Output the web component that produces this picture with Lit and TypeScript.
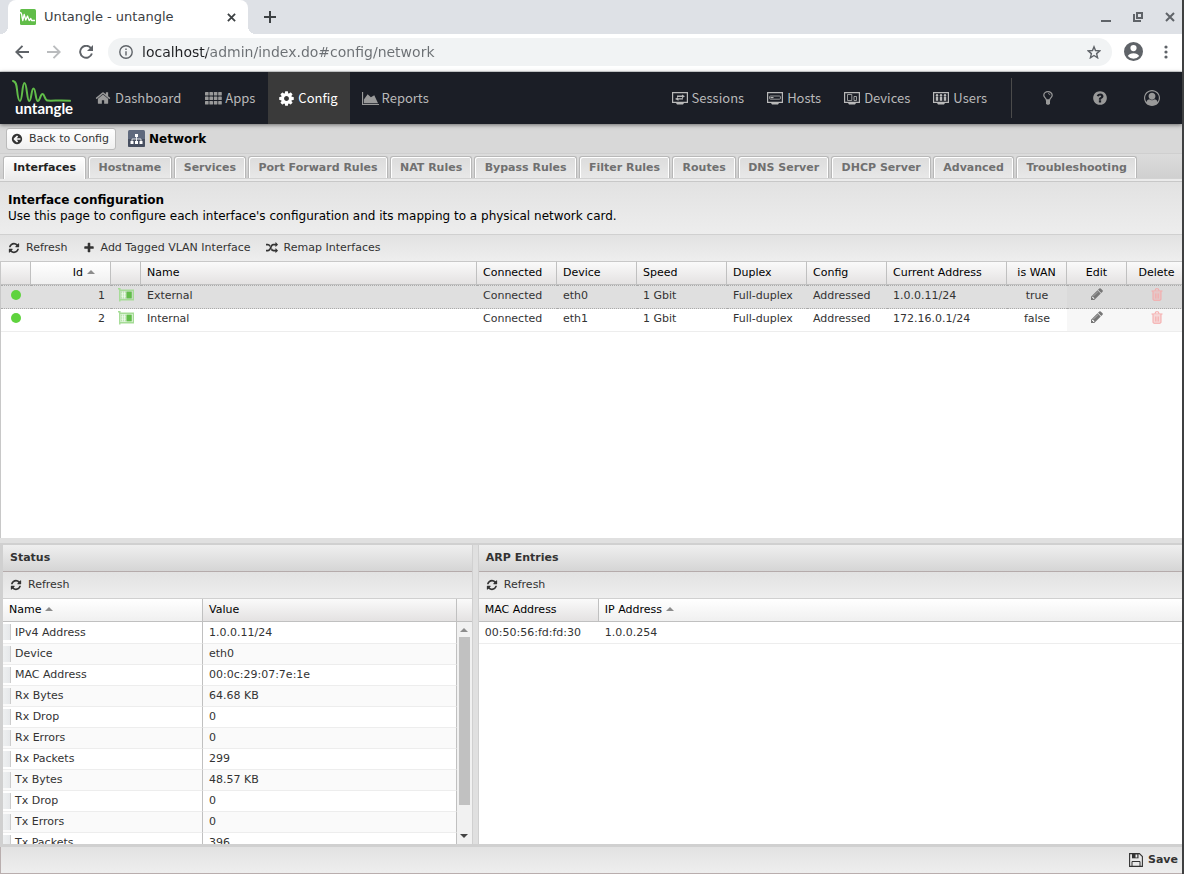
import { LitElement, html, css, svg, nothing } from "lit";
import { customElement, property } from "lit/decorators.js";

type Glyph = { box: string; body: unknown };

const fa = (d: string): Glyph => ({ box: "0 0 1792 1792", body: svg`<path d=${d} />` });

const DISC =
  "m256-64q0 209-103 385.500t-279.500 279.500-385.500 103-385.500-103-279.500-279.500-103-385.500 103-385.500 279.500-279.500 385.500-103 385.500 103 279.500 279.500 103 385.500z";

const monitor = (inner: unknown): Glyph => ({
  box: "0 0 16 13",
  body: svg`<path fill="none" stroke="currentColor" stroke-width="1.2" d="M.6.6h14.8v9.800H.6z"/><path d="M4 11h8l-1 1.500H5z"/>${inner}`,
});

const GLYPHS: Record<string, Glyph> = {
  back: fa(
    "M1408 960v-128q0-26-19-45t-45-19h-502l189-189q19-19 19-45t-19-45l-91-91q-18-18-45-18t-45 18l-362 362-91 91q-18 18-18 45t18 45l91 91 362 362q18 18 45 18t45-18l91-91q18-18 18-45t-18-45l-189-189h502q26 0 45-19t19-45z" + DISC,
  ),
  refresh: fa(
    "M1639 1056q0 5-1 7-64 268-268 434.500t-478 166.500q-146 0-282.500-55t-243.500-157l-129 129q-19 19-45 19t-45-19-19-45v-448q0-26 19-45t45-19h448q26 0 45 19t19 45-19 45l-137 137q71 66 161 102t187 36q134 0 250-65t186-179q11-17 53-117 8-23 30-23h192q13 0 22.500 9.500t9.500 22.500zm25-800v448q0 26-19 45t-45 19h-448q-26 0-45-19t-19-45 19-45l138-138q-148-137-349-137-134 0-250 65t-186 179q-11 17-53 117-8 23-30 23h-199q-13 0-22.500-9.500t-9.500-22.500v-7q65-268 270-434.500t480-166.500q146 0 284 55.500t245 156.500l130-129q19-19 45-19t45 19 19 45z",
  ),
  plus: fa(
    "M1600 736v192q0 40-28 68t-68 28h-416v416q0 40-28 68t-68 28h-192q-40 0-68-28t-28-68v-416h-416q-40 0-68-28t-28-68v-192q0-40 28-68t68-28h416v-416q0-40 28-68t68-28h192q40 0 68 28t28 68v416h416q40 0 68 28t28 68z",
  ),
  random: fa(
    "M666 481q-60 92-137 273-22-45-37-72.500t-40.500-63.500-51-56.500-63-35-81.500-14.500h-224q-14 0-23-9t-9-23v-192q0-14 9-23t23-9h224q250 0 410 225zm1126 799q0 14-9 23l-320 320q-9 9-23 9-13 0-22.500-9.500t-9.500-22.500v-192q-32 0-85 .5t-81 1-73-1-71-5-64-10.500-63-18.500-58-28.500-59-40-55-53.500-56-69.500q59-93 136-273 22 45 37 72.500t40.500 63.500 51 56.500 63 35 81.500 14.500h256v-192q0-14 9-23t23-9q12 0 24 10l319 319q9 9 9 23zm0-896q0 14-9 23l-320 320q-9 9-23 9-13 0-22.500-9.500t-9.500-22.500v-192h-256q-48 0-87 15t-69 45-51 61.500-45 77.500q-32 62-78 171-29 66-49.500 111t-54 105-64 100-74 83-90 68.500-106.500 42-128 16.500h-224q-14 0-23-9t-9-23v-192q0-14 9-23t23-9h224q48 0 87-15t69-45 51-61.500 45-77.500q32-62 78-171 29-66 49.500-111t54-105 64-100 74-83 90-68.500 106.500-42 128-16.500h256v-192q0-14 9-23t23-9q12 0 24 10l319 319q9 9 9 23z",
  ),
  pencil: fa(
    "M491 1536l91-91-235-235-91 91v107h128v128h107zm523-928q0-22-22-22-10 0-17 7l-542 542q-7 7-7 17 0 22 22 22 10 0 17-7l542-542q7-7 7-17zm-54-192l416 416-832 832h-416v-416zm683 96q0 53-37 90l-166 166-416-416 166-165q36-38 90-38 53 0 91 38l235 234q37 39 37 91z",
  ),
  cog: fa(
    "M1152 896q0-106-75-181t-181-75-181 75-75 181 75 181 181 75 181-75 75-181zm512-109v222q0 12-8 23t-20 13l-185 28q-19 54-39 91 35 50 107 138 10 12 10 25t-9 23q-27 37-99 108t-94 71q-12 0-26-9l-138-108q-44 23-91 38-16 136-29 186-7 28-36 28h-222q-14 0-24.500-8.500t-11.500-21.500l-28-184q-49-16-90-37l-141 107q-10 9-25 9-14 0-25-11-126-114-165-168-7-10-7-23 0-12 8-23 15-21 51-66.500t54-70.500q-27-50-41-99l-183-27q-13-2-21-12.500t-8-23.500v-222q0-12 8-23t19-13l186-28q14-46 39-92-40-57-107-138-10-12-10-24 0-10 9-23 26-36 98.500-107.500t94.500-71.500q13 0 26 10l138 107q44-23 91-38 16-136 29-186 7-28 36-28h222q14 0 24.500 8.500t11.500 21.500l28 184q49 16 90 37l142-107q9-9 24-9 13 0 25 10 129 119 165 170 7 8 7 22 0 12-8 23-15 21-51 66.500t-54 70.500q26 50 41 98l183 28q13 2 21 12.500t8 23.500z",
  ),
  home: fa(
    "M1472 992v480q0 26-19 45t-45 19h-384v-384h-256v384h-384q-26 0-45-19t-19-45v-480q0-1 .5-3t.5-3l575-474 575 474q1 2 1 6zm223-69l-62 74q-8 9-21 11h-3q-13 0-21-7l-692-577-692 577q-12 8-24 7-13-2-21-11l-62-74q-8-10-7-23.500t11-21.500l719-599q32-26 76-26t76 26l244 204v-195q0-14 9-23t23-9h192q14 0 23 9t9 23v408l219 182q10 8 11 21.500t-7 23.500z",
  ),
  question: fa(
    "M1024 1376v-192q0-14-9-23t-23-9h-192q-14 0-23 9t-9 23v192q0 14 9 23t23 9h192q14 0 23-9t9-23zm256-672q0-88-55.500-163t-138.500-116-170-41q-243 0-371 213-15 24 8 42l132 100q7 6 19 6 16 0 25-12 53-68 86-92 34-24 86-24 48 0 85.500 26t37.500 59q0 38-20 61t-68 45q-63 28-115.500 86.500t-52.500 125.500v36q0 14 9 23t23 9h192q14 0 23-9t9-23q0-19 21.500-49.500t54.500-49.500q32-18 49-28.500t46-35 44.500-48 28-60.500 12.500-81zm384 192q0 209-103 385.500t-279.500 279.500-385.500 103-385.500-103-279.500-279.500-103-385.500 103-385.500 279.500-279.500 385.500-103 385.500 103 279.500 279.500 103 385.500z",
  ),
  account: fa(
    "M896 0q182 0 348 71t286 191 191 286 71 348q0 181-70.500 347t-190.500 286-286 191.500-349 71.500-349-71-285.500-191.500-190.500-286-71-347.500 71-348 191-286 286-191 348-71zm619 1351q149-205 149-455 0-156-61-298t-164-245-245-164-298-61-298 61-245 164-164 245-61 298q0 250 149 455 66-327 306-327 131 128 313 128t313-128q240 0 306 327zm-235-647q0-159-112.500-271.500t-271.500-112.500-271.500 112.500-112.500 271.500 112.500 271.500 271.500 112.500 271.500-112.500 112.500-271.500z",
  ),
  apps: {
    box: "0 0 17 13",
    body: svg`${[0, 4.5, 9].map((y) => [0, 4.4, 8.8, 13.2].map((x) => svg`<rect x=${x} y=${y} width="3.6" height="3.6" rx=".6"/>`))}`,
  },
  area: {
    box: "0 0 18 14",
    body: svg`<path d="M0 0h1.200v12.800H18V14H0zM2 12V8l4-5.500 3.400 3.200L13 3.600 17 12z"/>`,
  },
  trash: {
    box: "0 0 12 13",
    body: svg`<path fill-opacity=".4" d="M2 4h8v8H2z"/><path fill="none" stroke="currentColor" d="M.5 3h11M4 2.800 4.600.8h2.800L8 2.800M2 3v8.200q0 1.100 1 1.100h6q1 0 1-1.100V3"/><path fill="none" stroke="currentColor" stroke-width=".7" d="M4.500 5.500v5M6 5.500v5M7.500 5.500v5"/>`,
  },
  bulb: {
    box: "0 0 10 14",
    body: svg`<path fill="none" stroke="currentColor" stroke-width="1.200" d="M3.300 8.800C3.300 7 .8 6.500.8 4.200.8 2.300 2.600.7 5 .7s4.200 1.600 4.200 3.500c0 2.300-2.500 2.800-2.500 4.600z"/><path d="M3 9h4v3.500L6 13.700H4L3 12.500z"/><path fill="none" stroke="currentColor" stroke-width=".8" d="M5 2.500q1.800 0 2 1.700"/>`,
  },
  sessions: monitor(svg`<path d="M5 3.600h5V2.400l3 1.900-3 1.900V5H5zM11 6.200v1.400H6.500v1.200L3 6.900 6 5v1.200z"/>`),
  hosts: monitor(svg`<rect x="2.600" y="4" width="10.800" height="3.200" rx=".8" fill="none" stroke="currentColor" stroke-width=".8"/><path d="M3.500 5h3v1.200h-3z"/>`),
  devices: monitor(svg`<path fill="none" stroke="currentColor" stroke-width=".8" d="M3.500 2.500h4.300v6H3.500zM10 4.500h2.500v4H10z"/>`),
  users: monitor(svg`${[4, 8, 12].map((x) => svg`<circle cx=${x} cy="3.200" r="1.200"/><rect x=${x - 1.2} y="4.600" width="2.400" height="4.200"/>`)}`),
  card: {
    box: "0 0 16 14",
    body: svg`<path fill="none" stroke="#a5dc96" stroke-width="1.500" d="M0 .8h1.800v12.700M1.800 2.200h13.500v9.600H1.800"/><path fill="#a5dc96" d="M3 3.500h5.500v7H3z"/><path stroke="#fff" stroke-width=".7" d="M3 5.200h5M3 7h5M3 8.800h5M4.700 3.500v7M6.600 3.500v7"/><path fill="#61bd49" d="M8.500 3.500h5.300v7H8.500z"/>`,
  },
  tree: {
    box: "0 0 17 17",
    body: svg`<rect width="17" height="17" rx="1.500" fill="#5f697d"/><path d="M0 9h17v6.500q0 1.500-1.500 1.500h-14Q0 17 0 15.500z" fill="#474f60"/><path fill="#fff" d="M7 4h3v3H7zM2.500 11h3v3h-3zM7 11h3v3H7zM11.500 11h3v3h-3z"/><path fill="none" stroke="#fff" stroke-width=".8" d="M8.500 7v4M4 11V9h9v2"/>`,
  },
  save: {
    box: "0 0 14 14",
    body: svg`<path fill="none" stroke="currentColor" stroke-width="1.100" d="M.6.6h9.800l3 3v9.800H.6z"/><path d="M3 1h6.500v4.300H3z"/><path fill="#ededed" d="M6.500 1.500h1.800v3H6.500z"/><path fill="none" stroke="currentColor" d="M3 13.300V8.500h8v4.800"/>`,
  },
  favicon: {
    box: "0 0 16 16",
    body: svg`<rect width="16" height="16" rx="1.500" fill="#61bd49"/><path fill="none" stroke="#fff" stroke-width="1.300" stroke-linejoin="round" d="M0 3.500q1.800 0 2 4.500l.8 3.500L4.200 5.500 5.800 11 7.500 7l1.700 4.500 1.600-2 .8 2H15"/>`,
  },
  close: { box: "0 0 10 10", body: svg`<path fill="none" stroke="currentColor" stroke-width="2" d="m1 1 8 8M9 1 1 9"/>` },
  add: { box: "0 0 12 12", body: svg`<path fill="none" stroke="currentColor" stroke-width="2" d="M6 0v12M0 6h12"/>` },
  min: { box: "0 0 10 10", body: svg`<path d="M0 8h10v2H0z"/>` },
  restore: { box: "0 0 10 10", body: svg`<path fill="none" stroke="currentColor" stroke-width="2" d="M4 1h5v5H4zM1 2v7h7"/>` },
  left: { box: "0 0 14 14", body: svg`<path fill="none" stroke="currentColor" stroke-width="1.900" d="M14 7H1.500M7.500.8 1.300 7l6.200 6.200"/>` },
  right: { box: "0 0 14 14", body: svg`<path fill="none" stroke="currentColor" stroke-width="1.900" d="M0 7h12.500M6.500.8 12.700 7l-6.200 6.200"/>` },
  reload: { box: "0 0 14 14", body: svg`<path fill="none" stroke="currentColor" stroke-width="1.900" d="M12 3.200A6 6 0 1 0 12.900 8.500"/><path d="M14 0v6H8z"/>` },
  info: {
    box: "0 0 14 14",
    body: svg`<circle cx="7" cy="7" r="6.200" fill="none" stroke="currentColor" stroke-width="1.400"/><path d="M6.300 6.200h1.400v4.300H6.300zM6.300 3.500h1.400v1.500H6.300z"/>`,
  },
  star: {
    box: "0 0 14 14",
    body: svg`<path fill="none" stroke="currentColor" stroke-width="1.400" d="m7 1.800 1.500 3.700 4.300.3-3.200 2.800 1 4.200L7 10.500l-3.600 2.300 1-4.200L1.200 5.800l4.300-.3z"/>`,
  },
  person: {
    box: "0 0 19 19",
    body: svg`<path fill-rule="evenodd" d="M9.500 0a9.500 9.500 0 1 1 0 19 9.500 9.500 0 0 1 0-19zm0 3a3 3 0 1 0 0 6.200 3 3 0 0 0 0-6.200zm0 8.200c-2.600 0-4.900 1.200-5.700 2.800a7.300 7.300 0 0 0 11.400 0c-.8-1.600-3.100-2.800-5.700-2.800z"/>`,
  },
  dots: { box: "0 0 4 14", body: svg`<circle cx="2" cy="2" r="1.600"/><circle cx="2" cy="7" r="1.600"/><circle cx="2" cy="12" r="1.600"/>` },
};

@customElement("ui-icon")
export class UiIcon extends LitElement {
  @property() name = "";
  static styles = css`
    :host { display: inline-flex; flex: none; width: 14px; height: 14px; }
    svg { display: block; width: 100%; height: 100%; fill: currentColor; }
  `;
  render() {
    const g = GLYPHS[this.name];
    return g ? html`<svg viewBox=${g.box} aria-hidden="true">${g.body}</svg>` : nothing;
  }
}

const shared = css`
  * { box-sizing: border-box; }
  button { font: inherit; color: inherit; background: none; border: 0; padding: 0; display: inline-flex; align-items: center; }
  a { color: inherit; text-decoration: none; }
  table { border-collapse: separate; border-spacing: 0; table-layout: fixed; width: 100%; }
  th, td { text-align: left; font-weight: 400; padding: 0 6px; white-space: nowrap; overflow: hidden; }
  th {
    height: 23px; line-height: 21px; padding-bottom: 1px; color: #000;
    background: linear-gradient(#fafafa, #e4e2e2);
    border-right: 1px solid #c0c0c0; border-bottom: 1px solid #c0c0c0;
  }
  th.sorted { background: linear-gradient(#ffffff, #f0f0f0); }
  th.sorted::after {
    content: ""; display: inline-block; margin-left: 4px; vertical-align: 2px;
    border: 4px solid transparent; border-top: 0; border-bottom-color: #8c8c8c;
  }
  .bar {
    display: flex; align-items: center; gap: 15px; height: 26px; padding: 0 7px; color: #333;
    background: linear-gradient(#e2e2e2, #eeeeee);
  }
  .bar button { gap: 6px; }
  .bar ui-icon { width: 12px; height: 12px; }
`;

@customElement("browser-frame")
export class BrowserFrame extends LitElement {
  static styles = [shared, css`
    :host { display: block; flex: none; color: #3c4043; font-family: "DejaVu Sans", sans-serif; }
    .strip { display: flex; align-items: center; height: 34px; padding: 0 7px 0 8px; background: #dee1e6; }
    .tab {
      position: relative; display: flex; align-items: center; gap: 8px; width: 240px; height: 34px; padding: 0 12px;
      background: #fff; border-radius: 8px 8px 0 0; font-size: 13px;
    }
    .tab::before, .tab::after { content: ""; position: absolute; bottom: 0; width: 8px; height: 8px; }
    .tab::before { right: 100%; background: radial-gradient(circle at 0 0, #dee1e6 8px, #fff 8px); }
    .tab::after { left: 100%; background: radial-gradient(circle at 100% 0, #dee1e6 8px, #fff 8px); }
    .title { flex: 1; white-space: nowrap; }
    .favicon { width: 16px; height: 16px; }
    .close { width: 9px; height: 9px; }
    .new { margin: 0 auto 0 16px; }
    .new ui-icon { width: 12px; height: 12px; }
    .win { display: flex; gap: 22px; color: #5f6368; }
    .win ui-icon { width: 10px; height: 10px; }
    .tools {
      display: flex; align-items: center; height: 38px; padding: 0 14px 2px 15px; background: #fff;
      border-bottom: 1px solid #d9dbdc; color: #5f6368;
    }
    .tools button { margin-right: 18px; }
    .tools .off { color: #babcbe; }
    .tools .reload { margin-right: 15px; }
    .omni { display: flex; align-items: center; gap: 9px; flex: 1; height: 28px; padding: 0 11px; border-radius: 14px; background: #f1f3f4; }
    .omni button { margin: 0; }
    .url {
      flex: 1; min-width: 0; border: 0; padding: 0; outline: 0; font: 14px "DejaVu Sans", sans-serif; color: transparent;
      background: linear-gradient(90deg, #202124 65px, #6b6f73 65px); -webkit-background-clip: text; background-clip: text;
    }
    .tools .me { margin: 0 21px 0 12px; }
    .me ui-icon { width: 19px; height: 19px; }
    .tools .more { margin: 0; }
    .more ui-icon { width: 4px; }
  `];
  render() {
    return html`
      <div class="strip">
        <div class="tab">
          <ui-icon class="favicon" name="favicon"></ui-icon><span class="title">Untangle - untangle</span>
          <button aria-label="Close tab"><ui-icon class="close" name="close"></ui-icon></button>
        </div>
        <button class="new" aria-label="New tab"><ui-icon name="add"></ui-icon></button>
        <div class="win">
          <button aria-label="Minimize"><ui-icon name="min"></ui-icon></button>
          <button aria-label="Restore"><ui-icon name="restore"></ui-icon></button>
          <button aria-label="Close"><ui-icon name="close"></ui-icon></button>
        </div>
      </div>
      <div class="tools">
        <button aria-label="Back"><ui-icon name="left"></ui-icon></button>
        <button class="off" aria-label="Forward"><ui-icon name="right"></ui-icon></button>
        <button class="reload" aria-label="Reload"><ui-icon name="reload"></ui-icon></button>
        <div class="omni">
          <button aria-label="Site information"><ui-icon name="info"></ui-icon></button>
          <input class="url" aria-label="Address" .value=${"localhost/admin/index.do#config/network"} />
          <button aria-label="Bookmark"><ui-icon name="star"></ui-icon></button>
        </div>
        <button class="me" aria-label="Profile"><ui-icon name="person"></ui-icon></button>
        <button class="more" aria-label="Menu"><ui-icon name="dots"></ui-icon></button>
      </div>`;
  }
}

@customElement("main-nav")
export class MainNav extends LitElement {
  static styles = [shared, css`
    :host {
      display: flex; flex: none; height: 52px; background: #1b1e26; color: #b9b9b9; position: relative;
      box-shadow: 0 1px 4px rgba(0, 0, 0, 0.5); font: 13px/20px "Noto Sans CJK SC", "Noto Sans CJK JP", sans-serif;
    }
    .logo { width: 84px; height: 52px; flex: none; }
    .word { font: bold 15px Lato, sans-serif; fill: #fff; }
    .item { display: flex; align-items: center; gap: 4px; padding: 0 12px 0 11px; }
    .item.active { background: #3a3a3a; color: #fff; }
    .left ui-icon { color: #9a9a9a; }
    .left .active ui-icon { color: #fff; }
    .home { width: 16px; height: 16px; }
    .cog { width: 17px; height: 17px; margin-left: -1px; margin-right: -1px; }
    .apps, .area { width: 17px; height: 15px; margin-right: -1px; }
    .right ui-icon { width: 16px; height: 13px; }
    nav { display: flex; }
    .left { gap: 1px; }
    .right { margin: 0 12px 0 auto; }
    .tools { display: flex; margin: 6px 4px 6px 0; padding-left: 10px; border-left: 1px solid #4b4b4b; color: #999; }
    .tools button { width: 52px; justify-content: center; }
    .tools .user { width: 16px; height: 16px; }
    .tools .help { width: 16px; height: 16px; }
  `];
  render() {
    const left = [["home", "Dashboard"], ["apps", "Apps"], ["cog", "Config"], ["area", "Reports"]];
    const right = [["sessions", "Sessions"], ["hosts", "Hosts"], ["devices", "Devices"], ["users", "Users"]];
    const link = ([icon, label]: string[]) => html`
      <a class="item ${label === "Config" ? "active" : ""}" href="#${label.toLowerCase()}">
        <ui-icon class=${icon} name=${icon}></ui-icon><span>${label}</span></a>`;
    return html`
      <svg class="logo" viewBox="0 0 84 52" role="img" aria-label="Untangle">
        <path fill="none" stroke="#61bd49" stroke-width="2" stroke-linecap="round" stroke-linejoin="round"
          d="M13 9c3 .5 3.500 3.500 4 8.500.6 6 1.300 11.500 3 11.500 2.500 0 2-18 4.500-18s2.300 18 4.700 18 2-12.500 4.300-12.500 2 12.500 4.300 12.500 2.500-7 4.700-7 2 6 5 6.500c4 .6 14-.7 22.500.3"/>
        <text class="word" x="15" y="42">untangle</text>
      </svg>
      <nav class="left">${left.map(link)}</nav>
      <nav class="right">${right.map(link)}</nav>
      <div class="tools">
        <button aria-label="Suggestions"><ui-icon name="bulb"></ui-icon></button>
        <button aria-label="Help"><ui-icon class="help" name="question"></ui-icon></button>
        <button aria-label="Account"><ui-icon class="user" name="account"></ui-icon></button>
      </div>`;
  }
}

const TABS = ["Interfaces", "Hostname", "Services", "Port Forward Rules", "NAT Rules", "Bypass Rules", "Filter Rules", "Routes", "DNS Server", "DHCP Server", "Advanced", "Troubleshooting"];

const INTERFACES = [
  { id: 1, name: "External", device: "eth0", address: "1.0.0.11/24", wan: true },
  { id: 2, name: "Internal", device: "eth1", address: "172.16.0.1/24", wan: false },
];

const STATUS = [
  ["IPv4 Address", "1.0.0.11/24"], ["Device", "eth0"], ["MAC Address", "00:0c:29:07:7e:1e"], ["Rx Bytes", "64.68 KB"],
  ["Rx Drop", "0"], ["Rx Errors", "0"], ["Rx Packets", "299"], ["Tx Bytes", "48.57 KB"], ["Tx Drop", "0"],
  ["Tx Errors", "0"], ["Tx Packets", "396"],
];

@customElement("interface-grid")
export class InterfaceGrid extends LitElement {
  static styles = [shared, css`
    :host { display: block; flex: 1 1 0; min-height: 0; overflow: hidden; background: #fff; border-left: 1px solid #c8c8c8; }
    /* the last column runs a little past the right edge of the view */
    .wide { margin-right: -5px; }
    .w30 { width: 30px; } .w60 { width: 60px; } .w80 { width: 80px; } .w90 { width: 90px; } .w120 { width: 120px; }
    th { border-top: 1px solid #c8c8c8; height: 24px; }
    td { height: 23px; line-height: 20px; padding-bottom: 2px; border-bottom: 1px solid #ededed; }
    .selected td { background: #dfdfdf; border-top: 1px dotted #aaa; border-bottom: 1px dotted #aaa; height: 24px; }
    .center { text-align: center; }
    .num { text-align: right; }
    th.num { padding-right: 15px; }
    .act { background: #f7f7f7; }
    .selected .act { background: #dadada; }
    .dot { display: block; width: 10px; height: 10px; margin: 0 0 2px 4px; border-radius: 50%; background: #5fd33e; }
    td button { vertical-align: -2px; }
    .card { width: 16px; margin-left: 1px; vertical-align: -3px; }
    .edit { color: #777; width: 14px; }
    .delete { color: #f5a9a9; width: 12px; height: 13px; }
  `];
  render() {
    return html`
      <div class="wide"><table>
        <colgroup>
          <col class="w30" /><col class="w80" /><col class="w30" /><col /><col class="w80" /><col class="w80" /><col class="w90" />
          <col class="w80" /><col class="w80" /><col class="w120" /><col class="w60" /><col class="w60" /><col class="w60" />
        </colgroup>
        <thead><tr>
          <th></th><th class="num sorted">Id</th><th></th><th>Name</th><th>Connected</th><th>Device</th><th>Speed</th><th>Duplex</th>
          <th>Config</th><th>Current Address</th><th class="center">is WAN</th><th class="center">Edit</th><th class="center">Delete</th>
        </tr></thead>
        <tbody>${INTERFACES.map((r, i) => html`
          <tr class=${i === 0 ? "selected" : ""}>
            <td><span class="dot"></span></td><td class="num">${r.id}</td><td><ui-icon class="card" name="card"></ui-icon></td>
            <td>${r.name}</td><td>Connected</td><td>${r.device}</td><td>1 Gbit</td><td>Full-duplex</td><td>Addressed</td>
            <td>${r.address}</td><td class="center">${r.wan}</td>
            <td class="center act"><button aria-label="Edit ${r.name}"><ui-icon class="edit" name="pencil"></ui-icon></button></td>
            <td class="center act"><button aria-label="Delete ${r.name}"><ui-icon class="delete" name="trash"></ui-icon></button></td>
          </tr>`)}
        </tbody>
      </table></div>`;
  }
}

@customElement("detail-panels")
export class DetailPanels extends LitElement {
  static styles = [shared, css`
    :host { display: flex; flex: none; height: 302px; box-sizing: border-box; border-bottom: 3px solid #d0d0d0; background: #e0e0e0; }
    .panel { display: flex; flex-direction: column; min-width: 0; background: #fff; border: 1px solid #d0d0d0; border-width: 0 1px; }
    .status { width: 40%; border-left-width: 3px; margin-right: 5px; }
    .arp { flex: 1; border-right: 0; }
    h2 {
      margin: 0; height: 27px; padding: 0 7px; font-size: 11px; line-height: 25px; color: #333; flex: none;
      background: linear-gradient(#efefef, #d5d5d5); border-bottom: 1px solid #b5abab;
    }
    .bar { border-bottom: 1px solid #d0d0d0; height: 27px; flex: none; }
    .body { display: flex; flex: 1; min-height: 0; overflow: hidden; }
    .data { flex: 1; min-width: 0; }
    th { height: 23px; }
    td { height: 21px; line-height: 20px; border-bottom: 1px solid #ededed; }
    tbody tr:first-child td { height: 22px; }
    .data .key { width: 200px; }
    .mac { width: 120px; }
    .arp th:last-child { border-right: 0; }
    .status td { border-right: 1px solid #c0c0c0; }
    .status td:first-child { padding-left: 12px; background: linear-gradient(90deg, #eef0f1, #e6e8ea 7px, #ccc 7px, #ccc 8px, transparent 8px) no-repeat 0 2px / 100% 16px; }
    .status tr:nth-child(even) td { background-color: #fafafa; }
    .scroll { width: 15px; display: flex; flex-direction: column; align-items: center; background: #f1f1f1; padding-bottom: 6px; }
    .cap { align-self: stretch; height: 23px; flex: none; background: linear-gradient(#fafafa, #e4e2e2); border-bottom: 1px solid #c0c0c0; }
    .up, .down { border: 4px solid transparent; flex: none; }
    .up { border-top: 0; border-bottom-color: #8c8c8c; margin: 6px 0 5px; }
    .down { border-bottom: 0; border-top-color: #444; margin-top: auto; }
    .thumb { width: 11px; height: 168px; background: #c1c1c1; }
  `];
  render() {
    const head = (title: string) => html`
      <h2>${title}</h2>
      <div class="bar"><button><ui-icon name="refresh"></ui-icon>Refresh</button></div>`;
    return html`
      <section class="panel status">${head("Status")}
        <div class="body">
          <div class="data"><table>
            <thead><tr><th class="key sorted">Name</th><th>Value</th></tr></thead>
            <tbody>${STATUS.map(([k, v]) => html`<tr><td>${k}</td><td>${v}</td></tr>`)}</tbody>
          </table></div>
          <div class="scroll" aria-hidden="true"><i class="cap"></i><i class="up"></i><i class="thumb"></i><i class="down"></i></div>
        </div>
      </section>
      <section class="panel arp">${head("ARP Entries")}
        <div class="body"><div class="data"><table>
          <thead><tr><th class="mac">MAC Address</th><th class="sorted">IP Address</th></tr></thead>
          <tbody><tr><td>00:50:56:fd:fd:30</td><td>1.0.0.254</td></tr></tbody>
        </table></div></div>
      </section>`;
  }
}

@customElement("app-root")
export class AppRoot extends LitElement {
  static styles = [shared, css`
    :host {
      display: flex; flex-direction: column; height: 100vh; box-sizing: border-box; border-right: 2px solid #3f4041; overflow: hidden;
      font: 11px/16px "DejaVu Sans", sans-serif; color: #333; background: #d8d8d8;
    }
    .crumb { display: flex; flex: none; align-items: center; gap: 12px; height: 30px; padding: 0 6px; border-bottom: 1px solid #cfcfcf; }
    .crumb .back { gap: 6px; height: 22px; padding: 0 6px 0 4px; border: 1px solid #bbb; border-radius: 3px; background: linear-gradient(#fff, #f0f0f0); }
    .back ui-icon { width: 12px; height: 12px; }
    h1 { display: flex; align-items: center; gap: 4px; margin: 0; font-size: 12px; color: #000; }
    h1 ui-icon { width: 17px; height: 17px; }
    .tabs { flex: none; height: 28px; padding: 2px 0 0 3px; border-bottom: 1px solid #c8c8c8; background: linear-gradient(#dcdcdc, #d0d0d0 24px, #b9b9b9 24px, #ebebeb 25px); }
    .strip { display: flex; align-items: flex-start; gap: 2px; max-width: 1134px; }
    .strip button {
      flex: 1 0 auto; justify-content: center; height: 22px; padding: 0 9px; font-weight: 700; color: #707070; white-space: nowrap;
      border: 1px solid #b8b8b8; border-bottom: 0; border-radius: 3px 3px 0 0; background: linear-gradient(#dcdcdc, #e8e8e8);
      box-shadow: inset 1px 1px #fff, inset -1px 0 #fff;
    }
    .strip .on { height: 23px; color: #222; background: linear-gradient(#fff, #ebebeb); }
    .intro { flex: none; height: 52px; padding: 10px 8px; background: linear-gradient(#e2e2e2, #ededed); font-size: 12px; color: #000; }
    .intro h2 { margin: 0; font-size: 12px; }
    .intro p { margin: 0; }
    .bar { flex: none; }
    .main { height: 27px; padding: 0 8px; border-top: 1px solid #d0d0d0; }
    .split { flex: none; height: 7px; background: #e0e0e0; border-bottom: 2px solid #d0d0d0; }
    .foot { height: 27px; padding-right: 4px; justify-content: flex-end; font-weight: 700; border: 1px solid #b9aeae; border-width: 0 0 1px 1px; }
    .foot ui-icon { width: 14px; height: 14px; }
    .foot button { gap: 5px; }
  `];
  render() {
    return html`
      <browser-frame></browser-frame>
      <main-nav></main-nav>
      <header class="crumb">
        <button class="back"><ui-icon name="back"></ui-icon>Back to Config</button>
        <h1><ui-icon name="tree"></ui-icon>Network</h1>
      </header>
      <div class="tabs"><div class="strip" role="tablist">
        ${TABS.map((t, i) => html`<button role="tab" aria-selected=${i === 0} class=${i ? "" : "on"}>${t}</button>`)}
      </div></div>
      <div class="intro">
        <h2>Interface configuration</h2>
        <p>Use this page to configure each interface's configuration and its mapping to a physical network card.</p>
      </div>
      <div class="bar main">
        <button><ui-icon name="refresh"></ui-icon>Refresh</button>
        <button><ui-icon name="plus"></ui-icon>Add Tagged VLAN Interface</button>
        <button><ui-icon name="random"></ui-icon>Remap Interfaces</button>
      </div>
      <interface-grid></interface-grid>
      <div class="split"></div>
      <detail-panels></detail-panels>
      <footer class="bar foot"><button><ui-icon name="save"></ui-icon>Save</button></footer>`;
  }
}
